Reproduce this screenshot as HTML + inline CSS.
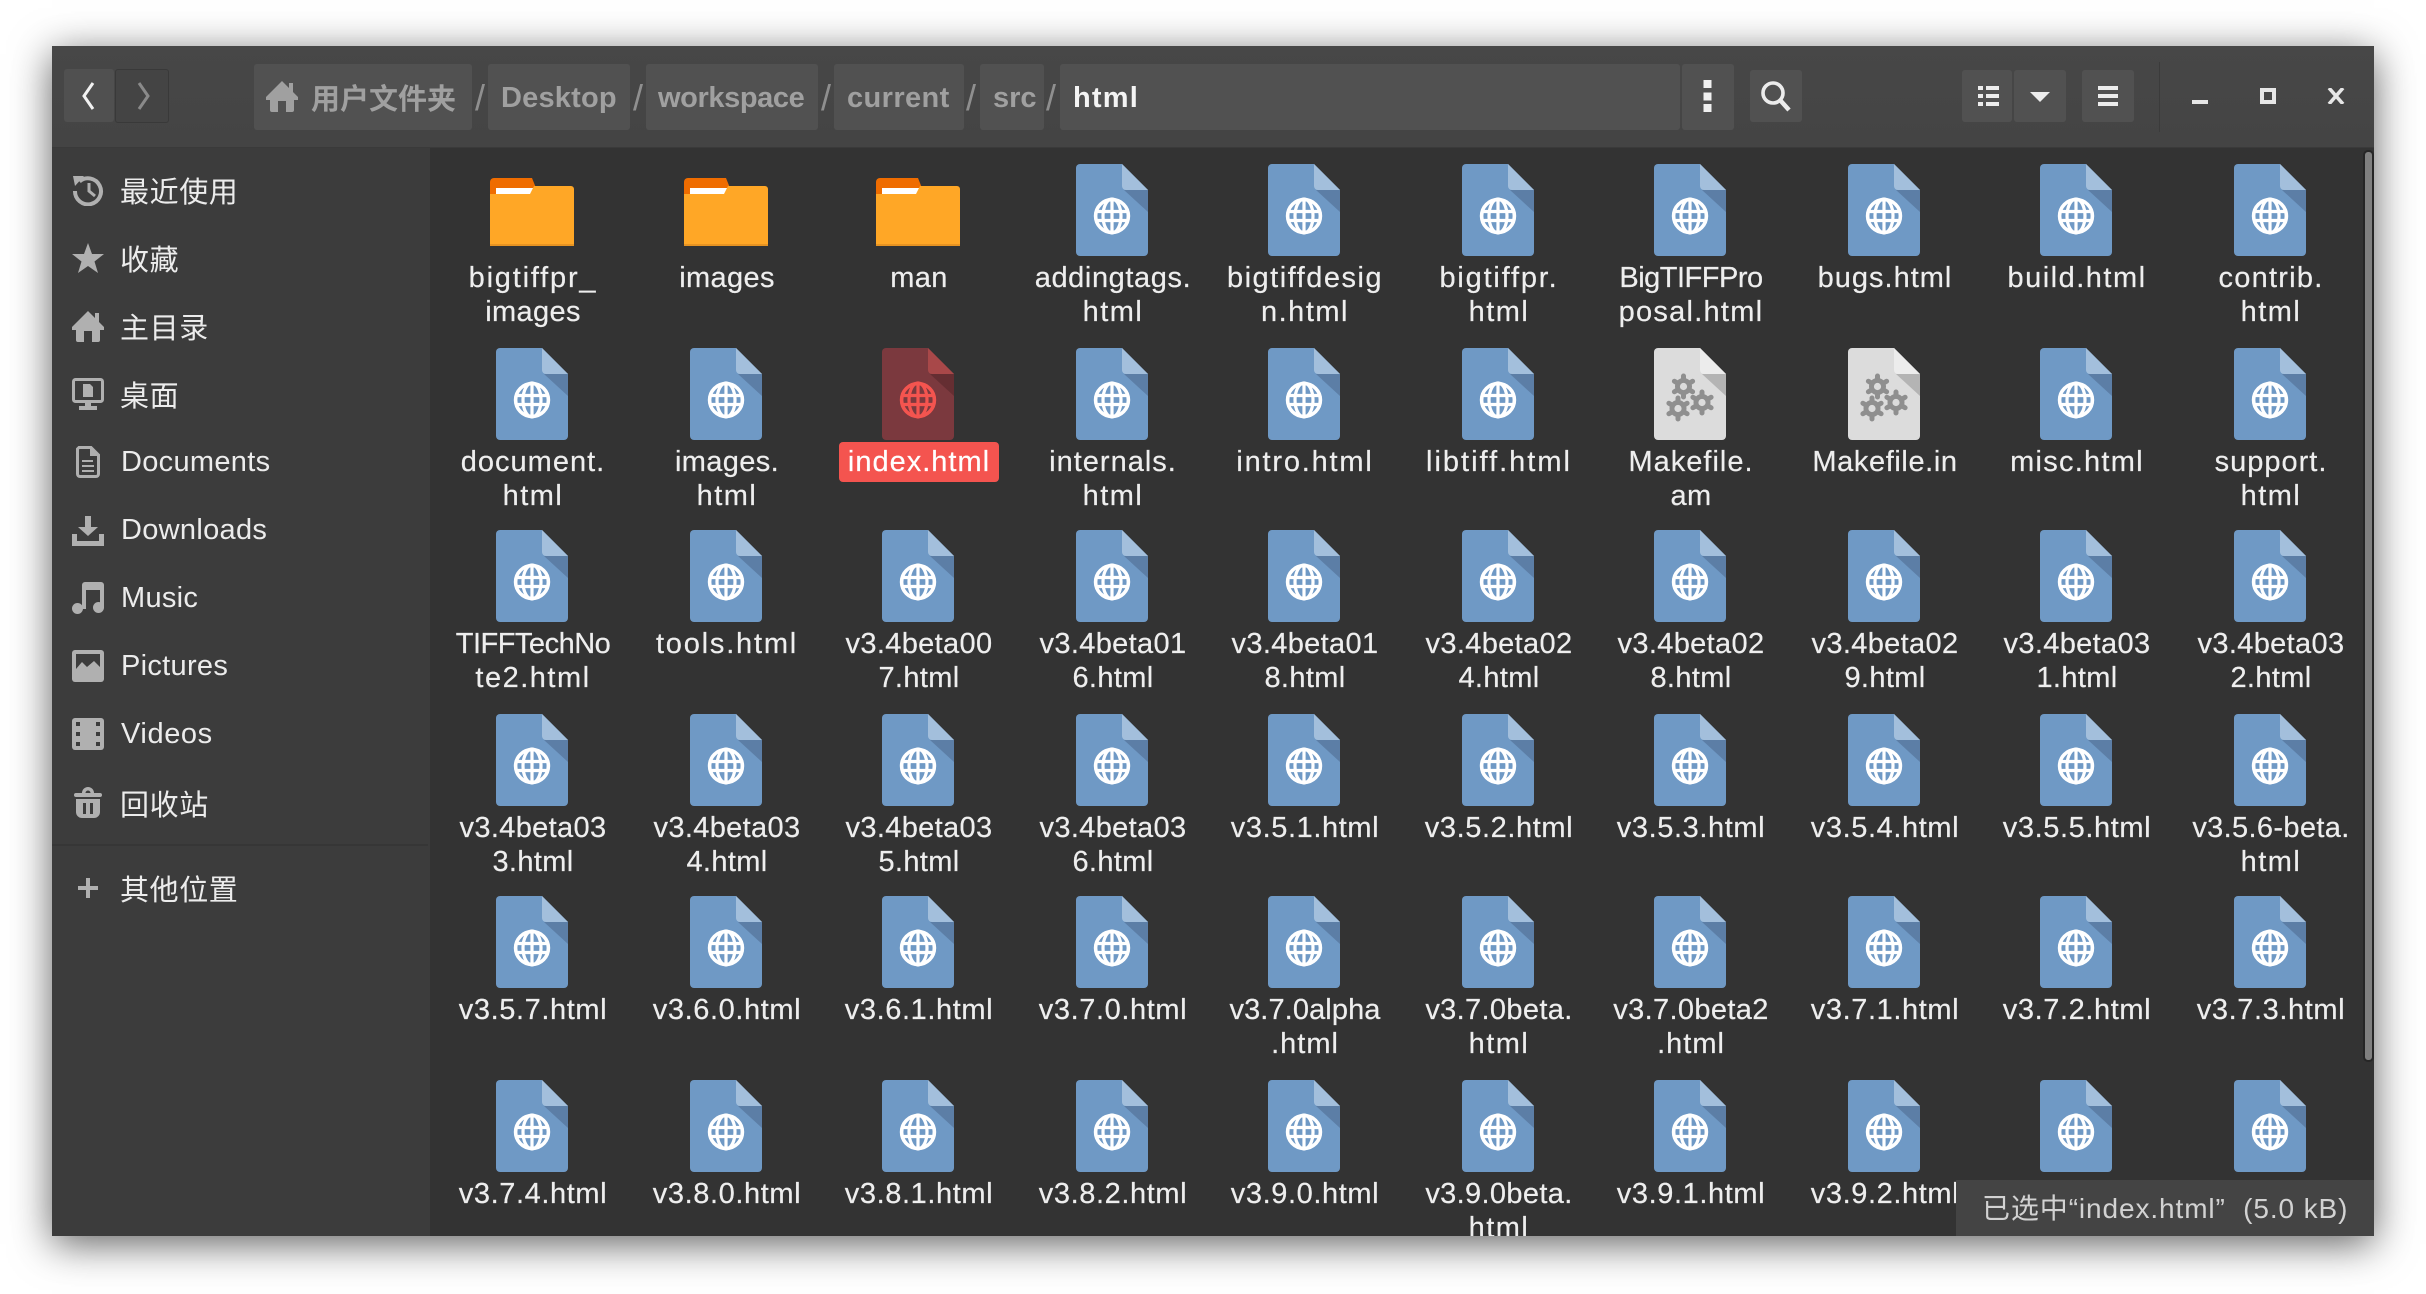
<!DOCTYPE html>
<html lang="zh"><head><meta charset="utf-8"><title>html</title>
<style>
html,body{margin:0;padding:0;background:#fff;width:2426px;height:1294px;overflow:hidden}
body{position:relative;font-family:"Liberation Sans","Noto Sans CJK SC",sans-serif}
#win{position:absolute;left:52px;top:46px;width:2322px;height:1190px;background:#333;box-shadow:0 8px 38px rgba(0,0,0,.62)}
#hdr{position:absolute;left:52px;top:46px;width:2322px;height:102px;background:linear-gradient(#474747,#444)}
#hline{position:absolute;left:52px;top:147px;width:2322px;height:1px;background:#3a3a3a}
#side{position:absolute;left:52px;top:148px;width:378px;height:1088px;background:#3c3c3c}
#sline{position:absolute;left:52px;top:844px;width:376px;height:2px;background:#363636}
#main{position:absolute;left:430px;top:148px;width:1944px;height:1088px;overflow:hidden;background:#333}
.b{position:absolute;background:#515151;border-radius:3px}
.t{position:absolute;white-space:pre;line-height:34px;font-size:29px}
.cr{font-weight:bold;color:#a0a0a0;top:81px}
.sl{color:#8f8f8f;top:78px;font-size:36px;line-height:40px}
.si{color:#ececec;left:121px;letter-spacing:.3px}
.cj{left:120px;letter-spacing:.6px}
.ic{position:absolute;left:72px;fill:#b0b0b0}
.r{position:absolute;left:0;height:184px;width:1944px}
.r>div{position:absolute;top:0;width:190px;padding-left:2px;text-align:center;color:#eee;font-size:29px;line-height:34px;white-space:nowrap;letter-spacing:.35px;-webkit-text-stroke:.2px #eee}
.r>div>svg{display:block;margin:0 auto 5px;height:92px;position:relative;left:-1px}
.r>div:nth-child(1){left:6px}.r>div:nth-child(2){left:200px}.r>div:nth-child(3){left:392px}.r>div:nth-child(4){left:586px}.r>div:nth-child(5){left:778px}.r>div:nth-child(6){left:972px}.r>div:nth-child(7){left:1164px}.r>div:nth-child(8){left:1358px}.r>div:nth-child(9){left:1550px}.r>div:nth-child(10){left:1744px}
.n{letter-spacing:-.5px}
.l01{letter-spacing:.1px}.l06{letter-spacing:.6px}.l10{letter-spacing:1px}.l12{letter-spacing:1.25px}.l15{letter-spacing:1.5px}.l18{letter-spacing:1.8px}.l20{letter-spacing:2px}
.sel{display:inline-block;background:#f4544f;color:#fff;border-radius:4px;padding:3px 9px;margin-top:-3px;letter-spacing:1px;-webkit-text-stroke:.2px #fff}
#st{position:absolute;left:1956px;top:1180px;width:418px;height:56px;background:#444}
</style></head><body>
<svg width="0" height="0" style="position:absolute">
<defs>
<symbol id="doc" viewBox="0 0 72 92"><path fill="#6f99c5" d="M4 0H46L72 26V88a4 4 0 0 1-4 4H4a4 4 0 0 1-4-4V4a4 4 0 0 1 4-4z"/><path fill="#5c7ea6" d="M48 26H72V48z"/><path fill="#a3bfdc" d="M46 0L72 26H50a4 4 0 0 1-4-4z"/><g fill="none" stroke="#fff" stroke-width="3.2"><circle cx="36" cy="52" r="16.4" stroke-width="3.6"/><ellipse cx="36" cy="52" rx="9" ry="17"/><path d="M36 35V69M20 47.5H52M20 56.5H52"/></g></symbol>
<symbol id="docsel" viewBox="0 0 72 92"><path fill="#7b393e" d="M4 0H46L72 26V88a4 4 0 0 1-4 4H4a4 4 0 0 1-4-4V4a4 4 0 0 1 4-4z"/><path fill="#652e32" d="M48 26H72V48z"/><path fill="#a84849" d="M46 0L72 26H50a4 4 0 0 1-4-4z"/><g fill="none" stroke="#f4544f" stroke-width="3.2"><circle cx="36" cy="52" r="16.4" stroke-width="3.6"/><ellipse cx="36" cy="52" rx="9" ry="17"/><path d="M36 35V69M20 47.5H52M20 56.5H52"/></g></symbol>
<g id="gear"><path d="M0-10.500V10.500M-9.100-5.250L9.100 5.250M-9.100 5.250L9.100-5.250" fill="none" stroke="#8f8f8f" stroke-width="5" stroke-linecap="round"/><circle r="8.500" fill="#8f8f8f"/><circle r="3.600" fill="#dcdcdc"/></g>
<symbol id="mk" viewBox="0 0 72 92"><path fill="#dcdcdc" d="M4 0H46L72 26V88a4 4 0 0 1-4 4H4a4 4 0 0 1-4-4V4a4 4 0 0 1 4-4z"/><path fill="#b4b4b4" d="M48 26H72V48z"/><path fill="#ececec" d="M46 0L72 26H50a4 4 0 0 1-4-4z"/><use href="#gear" x="29.500" y="38.500"/><use href="#gear" x="48" y="54.500"/><use href="#gear" x="24" y="60.500"/></symbol>
<symbol id="fd" viewBox="0 0 84 92"><g transform="translate(0 14)"><path fill="#ef6c00" d="M0 4a4 4 0 0 1 4-4H42L46 10V20H0z"/><path fill="#fff" d="M6 10H43V18H6z"/><path fill="#ffa726" d="M0 16H40L44 8H81a3 3 0 0 1 3 3V68H0z"/><path fill="#e69322" d="M0 66H84V68H0z"/></g></symbol>
<symbol id="home" viewBox="0 0 32 32"><path d="M16 0L23 7V2H27V11L32 16V19H28V29a2 2 0 0 1-2 2H20V20H12V31H6a2 2 0 0 1-2-2V19H0V16z"/></symbol>
</defs>
</svg>

<div id="win"></div>
<div id="hdr"></div><div id="hline"></div>

<div class="b" style="left:64px;top:69px;width:50px;height:53px;background:#505050"></div>
<div class="b" style="left:115px;top:69px;width:52px;height:52px;background:#444;border:1px solid #393939"></div>
<svg style="position:absolute;left:80px;top:80px" width="20" height="32"><path d="M13 3L4 16L13 29" fill="none" stroke="#f2f2f2" stroke-width="3"/></svg>
<svg style="position:absolute;left:134px;top:80px" width="20" height="32"><path d="M5 3L14 16L5 29" fill="none" stroke="#8a8a8a" stroke-width="3"/></svg>

<div class="b" style="left:254px;top:64px;width:218px;height:66px"></div>
<svg style="position:absolute;left:266px;top:81px;fill:#a0a0a0" width="32" height="32"><use href="#home"/></svg>
<div class="t cr" style="left:311px;top:83px">用户文件夹</div>
<div class="t sl" style="left:475px">/</div>
<div class="b" style="left:488px;top:64px;width:142px;height:66px"></div>
<div class="t cr" style="left:501px;letter-spacing:.2px">Desktop</div>
<div class="t sl" style="left:633px">/</div>
<div class="b" style="left:646px;top:64px;width:172px;height:66px"></div>
<div class="t cr" style="left:658px;letter-spacing:-.4px">workspace</div>
<div class="t sl" style="left:821px">/</div>
<div class="b" style="left:834px;top:64px;width:130px;height:66px"></div>
<div class="t cr" style="left:847px;letter-spacing:.4px">current</div>
<div class="t sl" style="left:966px">/</div>
<div class="b" style="left:980px;top:64px;width:64px;height:66px"></div>
<div class="t cr" style="left:993px">src</div>
<div class="t sl" style="left:1046px">/</div>
<div class="b" style="left:1060px;top:64px;width:620px;height:66px"></div>
<div class="t cr" style="left:1073px;color:#f4f4f4;letter-spacing:1.2px">html</div>
<div class="b" style="left:1682px;top:64px;width:52px;height:66px"></div>
<svg style="position:absolute;left:1703px;top:80px;fill:#f0f0f0" width="10" height="32"><rect x=".5" width="8" height="8"/><rect x=".5" y="12.500" width="8" height="8"/><rect x=".5" y="24" width="8" height="8"/></svg>

<div class="b" style="left:1750px;top:70px;width:52px;height:52px"></div>
<svg style="position:absolute;left:1760px;top:80px" width="32" height="32"><circle cx="13" cy="13" r="10" fill="none" stroke="#ececec" stroke-width="3.600"/><path d="M20 20L29 30" stroke="#ececec" stroke-width="4.500"/></svg>

<div class="b" style="left:1962px;top:70px;width:50px;height:52px"></div>
<svg style="position:absolute;left:1978px;top:86px;fill:#ececec" width="21" height="20"><rect width="5" height="4"/><rect x="8" width="13" height="4"/><rect y="8" width="5" height="4"/><rect x="8" y="8" width="13" height="4"/><rect y="16" width="5" height="4"/><rect x="8" y="16" width="13" height="4"/></svg>
<div class="b" style="left:2014px;top:70px;width:52px;height:52px"></div>
<svg style="position:absolute;left:2030px;top:92px" width="20" height="10"><path d="M0 0H20L10 10z" fill="#ececec"/></svg>
<div class="b" style="left:2082px;top:70px;width:52px;height:52px"></div>
<svg style="position:absolute;left:2098px;top:86px;fill:#ececec" width="20" height="20"><rect width="20" height="4"/><rect y="8" width="20" height="4"/><rect y="16" width="20" height="4"/></svg>
<div style="position:absolute;left:2159px;top:62px;width:1px;height:70px;background:#3b3b3b"></div>
<div style="position:absolute;left:2192px;top:100px;width:16px;height:4px;background:#e6e6e6"></div>
<div style="position:absolute;left:2260px;top:88px;width:8px;height:8px;border:4px solid #e6e6e6;box-sizing:content-box"></div>
<svg style="position:absolute;left:2327px;top:88px" width="18" height="16"><path d="M2 0L16 16M16 0L2 16" stroke="#e6e6e6" stroke-width="3.6"/></svg>

<div id="side"></div><div id="sline"></div>

<svg class="ic" style="top:174px" width="32" height="32"><path d="M7.500 7.500A13 13 0 1 1 3 17" fill="none" stroke="#b0b0b0" stroke-width="4"/><path d="M1 2L12 2L3 12z"/><path d="M17 9V17L23 22" fill="none" stroke="#b0b0b0" stroke-width="3"/></svg>
<div class="t si cj" style="top:176px">最近使用</div>
<svg class="ic" style="top:243px" width="32" height="31"><path d="M16 0L20 11H32L22.500 18.500L26 30L16 23L6 30L9.500 18.500L0 11H12z"/></svg>
<div class="t si cj" style="top:244px">收藏</div>
<svg class="ic" style="top:311px;fill:#b0b0b0" width="32" height="32"><use href="#home"/></svg>
<div class="t si cj" style="top:312px">主目录</div>
<svg class="ic" style="top:378px" width="32" height="32"><rect x="1.500" y="1.500" width="29" height="22" rx="2" fill="none" stroke="#b0b0b0" stroke-width="3"/><path d="M11 6H18L21 9V19H11z"/><path d="M13 25H19V28H25V32H7V28H13z"/></svg>
<div class="t si cj" style="top:380px">桌面</div>
<svg class="ic" style="top:446px" width="32" height="32"><path d="M7 1.500H19L26.500 9V28a2.500 2.500 0 0 1-2.500 2.500H8a2.500 2.500 0 0 1-2.500-2.500V3z" fill="none" stroke="#b0b0b0" stroke-width="3"/><path d="M10 14H21V16H10zM10 19H22V21H10zM10 24H22V26H10z"/><path d="M18 2L26 10H18z"/></svg>
<div class="t si" style="top:445px">Documents</div>
<svg class="ic" style="top:516px" width="32" height="30"><path d="M13 0H19V11H26L16 20L6 11H13z"/><path d="M0 18H5V25H27V18H32V30H0z"/></svg>
<div class="t si" style="top:513px">Downloads</div>
<svg class="ic" style="top:582px" width="32" height="32"><path d="M10 3a3 3 0 0 1 3-3H29a3 3 0 0 1 3 3V26H28V8H14V27H10z"/><circle cx="5.500" cy="26.500" r="5.500"/><circle cx="26.500" cy="25.500" r="5.500"/></svg>
<div class="t si" style="top:581px">Music</div>
<svg class="ic" style="top:650px" width="32" height="32"><rect width="32" height="32" rx="3"/><path fill="#3c3c3c" d="M4 4H28V17L22 11L15 17L10 12L4 19z"/></svg>
<div class="t si" style="top:649px">Pictures</div>
<svg class="ic" style="top:718px" width="32" height="32"><rect width="32" height="32" rx="3"/><path fill="#3c3c3c" d="M4 4H8V8H4zM24 4H28V8H24zM4 14H8V18H4zM24 14H28V18H24zM4 24H8V28H4zM24 24H28V28H24z"/></svg>
<div class="t si" style="top:717px;letter-spacing:.6px">Videos</div>
<svg class="ic" style="top:786px" width="32" height="32"><path d="M10 7a6 6 0 0 1 12 0h-3.500a2.500 2.500 0 0 0-5 0z"/><rect x="2" y="7" width="28" height="4" rx="2"/><path fill-rule="evenodd" d="M4 13H28V26a6 6 0 0 1-6 6H10a6 6 0 0 1-6-6zM11 17V28H14V17zM18 17V28H21V17z"/></svg>
<div class="t si cj" style="top:789px">回收站</div>
<svg class="ic" style="top:878px;left:78px" width="20" height="20"><path d="M8 0H12V8H20V12H12V20H8V12H0V8H8z"/></svg>
<div class="t si cj" style="top:874px">其他位置</div>

<div id="main">
<div class="r" style="top:16px">
<div><svg width="84"><use href="#fd"/></svg><span class="l18">bigtiffpr_</span><br>images</div>
<div><svg width="84"><use href="#fd"/></svg>images</div>
<div><svg width="84"><use href="#fd"/></svg>man</div>
<div><svg width="72"><use href="#doc"/></svg><span class="l06">addingtags.</span><br><span class="l15">html</span></div>
<div><svg width="72"><use href="#doc"/></svg><span class="l15">bigtiffdesig</span><br><span class="l15">n.html</span></div>
<div><svg width="72"><use href="#doc"/></svg><span class="l18">bigtiffpr.</span><br><span class="l15">html</span></div>
<div><svg width="72"><use href="#doc"/></svg><span class="n">BigTIFFPro</span><br><span class="l12">posal.html</span></div>
<div><svg width="72"><use href="#doc"/></svg><span class="l10">bugs.html</span></div>
<div><svg width="72"><use href="#doc"/></svg><span class="l15">build.html</span></div>
<div><svg width="72"><use href="#doc"/></svg><span class="l12">contrib.</span><br><span class="l15">html</span></div>
</div>
<div class="r" style="top:200px">
<div><svg width="72"><use href="#doc"/></svg><span class="l10">document.</span><br><span class="l15">html</span></div>
<div><svg width="72"><use href="#doc"/></svg>images.<br><span class="l15">html</span></div>
<div><svg width="72"><use href="#docsel"/></svg><span class="sel">index.html</span></div>
<div><svg width="72"><use href="#doc"/></svg><span class="l10">internals.</span><br><span class="l15">html</span></div>
<div><svg width="72"><use href="#doc"/></svg><span class="l18">intro.html</span></div>
<div><svg width="72"><use href="#doc"/></svg><span class="l20">libtiff.html</span></div>
<div><svg width="72"><use href="#mk"/></svg><span class="l10">Makefile.</span><br>am</div>
<div><svg width="72"><use href="#mk"/></svg><span class="l06">Makefile.in</span></div>
<div><svg width="72"><use href="#doc"/></svg><span class="l12">misc.html</span></div>
<div><svg width="72"><use href="#doc"/></svg><span class="l10">support.</span><br><span class="l15">html</span></div>
</div>
<div class="r" style="top:382px">
<div><svg width="72"><use href="#doc"/></svg><span class="n">TIFFTechNo</span><br><span class="l15">te2.html</span></div>
<div><svg width="72"><use href="#doc"/></svg><span class="l18">tools.html</span></div>
<div><svg width="72"><use href="#doc"/></svg>v3.4beta00<br>7.html</div>
<div><svg width="72"><use href="#doc"/></svg>v3.4beta01<br>6.html</div>
<div><svg width="72"><use href="#doc"/></svg>v3.4beta01<br>8.html</div>
<div><svg width="72"><use href="#doc"/></svg>v3.4beta02<br>4.html</div>
<div><svg width="72"><use href="#doc"/></svg>v3.4beta02<br>8.html</div>
<div><svg width="72"><use href="#doc"/></svg>v3.4beta02<br>9.html</div>
<div><svg width="72"><use href="#doc"/></svg>v3.4beta03<br>1.html</div>
<div><svg width="72"><use href="#doc"/></svg>v3.4beta03<br>2.html</div>
</div>
<div class="r" style="top:566px">
<div><svg width="72"><use href="#doc"/></svg>v3.4beta03<br>3.html</div>
<div><svg width="72"><use href="#doc"/></svg>v3.4beta03<br>4.html</div>
<div><svg width="72"><use href="#doc"/></svg>v3.4beta03<br>5.html</div>
<div><svg width="72"><use href="#doc"/></svg>v3.4beta03<br>6.html</div>
<div><svg width="72"><use href="#doc"/></svg><span class="l06">v3.5.1.html</span></div>
<div><svg width="72"><use href="#doc"/></svg><span class="l06">v3.5.2.html</span></div>
<div><svg width="72"><use href="#doc"/></svg><span class="l06">v3.5.3.html</span></div>
<div><svg width="72"><use href="#doc"/></svg><span class="l06">v3.5.4.html</span></div>
<div><svg width="72"><use href="#doc"/></svg><span class="l06">v3.5.5.html</span></div>
<div><svg width="72"><use href="#doc"/></svg>v3.5.6-beta.<br><span class="l15">html</span></div>
</div>
<div class="r" style="top:748px">
<div><svg width="72"><use href="#doc"/></svg><span class="l06">v3.5.7.html</span></div>
<div><svg width="72"><use href="#doc"/></svg><span class="l06">v3.6.0.html</span></div>
<div><svg width="72"><use href="#doc"/></svg><span class="l06">v3.6.1.html</span></div>
<div><svg width="72"><use href="#doc"/></svg><span class="l06">v3.7.0.html</span></div>
<div><svg width="72"><use href="#doc"/></svg><span class="l01">v3.7.0alpha</span><br><span class="l10">.html</span></div>
<div><svg width="72"><use href="#doc"/></svg>v3.7.0beta.<br><span class="l15">html</span></div>
<div><svg width="72"><use href="#doc"/></svg>v3.7.0beta2<br><span class="l10">.html</span></div>
<div><svg width="72"><use href="#doc"/></svg><span class="l06">v3.7.1.html</span></div>
<div><svg width="72"><use href="#doc"/></svg><span class="l06">v3.7.2.html</span></div>
<div><svg width="72"><use href="#doc"/></svg><span class="l06">v3.7.3.html</span></div>
</div>
<div class="r" style="top:932px">
<div><svg width="72"><use href="#doc"/></svg><span class="l06">v3.7.4.html</span></div>
<div><svg width="72"><use href="#doc"/></svg><span class="l06">v3.8.0.html</span></div>
<div><svg width="72"><use href="#doc"/></svg><span class="l06">v3.8.1.html</span></div>
<div><svg width="72"><use href="#doc"/></svg><span class="l06">v3.8.2.html</span></div>
<div><svg width="72"><use href="#doc"/></svg><span class="l06">v3.9.0.html</span></div>
<div><svg width="72"><use href="#doc"/></svg>v3.9.0beta.<br><span class="l15">html</span></div>
<div><svg width="72"><use href="#doc"/></svg><span class="l06">v3.9.1.html</span></div>
<div><svg width="72"><use href="#doc"/></svg><span class="l06">v3.9.2.html</span></div>
<div><svg width="72"><use href="#doc"/></svg></div>
<div><svg width="72"><use href="#doc"/></svg></div>
</div>
</div>

<div style="position:absolute;left:2363px;top:150px;width:7px;height:908px;background:#808080;border:2px solid #262626;border-radius:5px"></div>

<div id="st"></div>
<div class="t" style="left:1982px;top:1192px;color:#d2d2d2;font-size:28px;letter-spacing:.9px">已选中“index.html”  (5.0 kB)</div>
</body></html>
